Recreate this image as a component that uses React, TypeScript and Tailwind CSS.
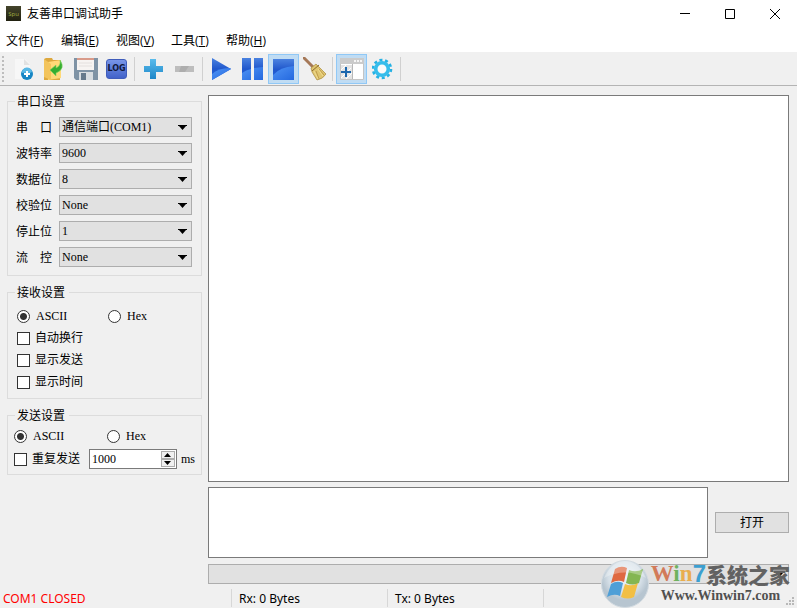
import type { ReactNode } from 'react';

const menus = [
  { label: '文件', key: 'F' },
  { label: '编辑', key: 'E' },
  { label: '视图', key: 'V' },
  { label: '工具', key: 'T' },
  { label: '帮助', key: 'H' },
];

const portFields = [
  { id: 'port', label: '串　口', value: '通信端口(COM1)' },
  { id: 'baud', label: '波特率', value: '9600' },
  { id: 'data', label: '数据位', value: '8' },
  { id: 'parity', label: '校验位', value: 'None' },
  { id: 'stop', label: '停止位', value: '1' },
  { id: 'flow', label: '流　控', value: 'None' },
];

function Arrow({ up = false }: { up?: boolean }) {
  return (
    <svg width="7" height="4" viewBox="0 0 7 4" className="block">
      <path d={up ? 'M0 4h7L3.500 0z' : 'M0 0h7L3.500 4z'} fill="#000" />
    </svg>
  );
}

function Select({ id, value, label }: { id: string; value?: string; label?: string }) {
  return (
    <div className="relative min-w-0 flex-1">
      <select
        id={id}
        aria-label={label}
        className="block h-5 w-full appearance-none border border-[#adadad] bg-[#e1e1e1] pl-[2px] pr-5 text-xs leading-4 outline-none"
      >
        <option>{value ?? ''}</option>
      </select>
      <svg width="9" height="5" viewBox="0 0 9 5" className="pointer-events-none absolute right-[5px] top-2">
        <path d="M0 0h9v1h-1L4.500 5 1 1H0z" fill="#000" />
      </svg>
    </div>
  );
}

function Group({ title, className, children }: { title: string; className: string; children: ReactNode }) {
  return (
    <fieldset className={`min-w-0 border border-[#dcdcdc] ${className}`}>
      <legend className="-ml-px pl-[2px] pr-1 pt-[2px] text-xs leading-4">{title}</legend>
      {children}
    </fieldset>
  );
}

function Radio({ name, label, checked }: { name: string; label: string; checked?: boolean }) {
  return (
    <label className="flex items-center gap-[6px] leading-4">
      <input
        type="radio"
        name={name}
        defaultChecked={checked}
        className="size-[13px] appearance-none rounded-full border border-[#333] bg-white checked:bg-[radial-gradient(circle,#333_0_3px,#fff_4px)]"
      />
      {label}
    </label>
  );
}

function Check({ label }: { label: string }) {
  return (
    <label className="flex h-[22px] items-center gap-[5px] leading-4">
      <input type="checkbox" className="size-[13px] appearance-none border border-[#333] bg-white checked:bg-[#333]" />
      {label}
    </label>
  );
}

function ToolButton({ label, active, children }: { label: string; active?: boolean; children: ReactNode }) {
  return (
    <button
      type="button"
      aria-label={label}
      className={`flex h-[30px] w-[31px] items-center justify-center border ${active ? 'border-[#90c8f6] bg-[#c0dcf3]' : 'border-transparent'}`}
    >
      {children}
    </button>
  );
}

function Separator() {
  return <div className="ml-[2px] mr-[3px] h-6 w-px bg-[#d0d0d0]" />;
}

function Toolbar() {
  return (
    <div className="flex h-[33px] items-center border-b border-[#b4b4b4] bg-[#f0f0f0] pl-[2px]">
      <svg width="6" height="28" viewBox="0 0 6 28">
        {[1, 5, 9, 13, 17, 21, 25].map((y) => (
          <rect key={y} x="0" y={y} width="2" height="2" fill="#bdbdbd" />
        ))}
      </svg>
      <ToolButton label="新建">
        <svg width="24" height="24" viewBox="1 0 24 24" className="shrink-0">
          <path d="M4 2h10l5 5v15H4z" fill="#f7f7f7" />
          <path d="M13 2l6 6h-6z" fill="#e2e2e2" />
          <circle cx="16" cy="17" r="6" fill="#1786c4" />
          <path d="M11 16a5 5 0 0 1 10-1c-3 2-6 0-10 1z" fill="#5ab9e6" />
          <path d="M16 14v6M13 17h6" stroke="#fff" strokeWidth="2" />
        </svg>
      </ToolButton>
      <ToolButton label="打开文件">
        <svg width="24" height="24" viewBox="1 0 24 24" className="shrink-0">
          <path d="M2 2l2-1h6l1 2h7v20H2z" fill="#dda83e" />
          <path d="M6 5l13-2v18l-13 2z" fill="#ffd978" />
          <path d="M2 2l7 5v16l-7-3z" fill="#f3c45c" />
          <path d="M18 3q6 9-4 13v3l-6-6 6-5v3q5-2 4-8z" fill="#35ad31" stroke="#7ed45e" strokeWidth=".6" />
        </svg>
      </ToolButton>
      <ToolButton label="保存">
        <svg width="24" height="24" viewBox="1 0 24 24" className="shrink-0">
          <path d="M1 1h24v22H3l-2-2z" fill="#7f93a5" />
          <path d="M4 1h17v12H4z" fill="#f7f4f2" />
          <path d="M4 1h17v2H4z" fill="#d99b8a" />
          <path d="M6 6h13M6 9h13" stroke="#e4e0de" />
          <path d="M6 15h14v8H6z" fill="#d8dde1" />
          <path d="M8 16h5v7H8z" fill="#65798b" />
        </svg>
      </ToolButton>
      <ToolButton label="日志">
        <span className="flex h-5 w-[21px] shrink-0 items-center justify-center rounded-[3px] border border-[#405dbb] bg-linear-to-b from-[#7895e8] to-[#4262c9] font-['DejaVu_Sans'] text-[8px] font-bold text-[#10183c]">
          LOG
        </span>
      </ToolButton>
      <Separator />
      <ToolButton label="添加">
        <svg width="20" height="20" viewBox="1 0 20 20" className="shrink-0">
          <defs>
            <linearGradient id="plus" x2="0" y2="1">
              <stop stopColor="#5bbcec" />
              <stop offset="1" stopColor="#1c86c8" />
            </linearGradient>
          </defs>
          <path d="M7 0h6v7h7v6h-7v7H7v-7H1V7h6z" fill="url(#plus)" />
        </svg>
      </ToolButton>
      <ToolButton label="删除">
        <svg width="20" height="20" viewBox="1 0 20 20" className="shrink-0">
          <path d="M1 7h19v6H1z" fill="#bdbdbd" />
          <path d="M7 7h8l-4 6H5z" fill="#adadad" />
        </svg>
      </ToolButton>
      <Separator />
      <ToolButton label="开始">
        <svg width="20" height="24" viewBox="2 0 20 24" className="shrink-0">
          <defs>
            <linearGradient id="blue" x2="0" y2="1">
              <stop stopColor="#4a82e0" />
              <stop offset=".5" stopColor="#2057cc" />
              <stop offset="1" stopColor="#2465df" />
            </linearGradient>
            <linearGradient id="shine" x2="1" y2="1">
              <stop stopColor="#4f94f4" />
              <stop offset="1" stopColor="#2468df" />
            </linearGradient>
          </defs>
          <path d="M2 1l19 11L2 23z" fill="url(#blue)" />
          <path d="M2 17q6-6 18-6l1 1L2 23z" fill="url(#shine)" />
        </svg>
      </ToolButton>
      <ToolButton label="暂停">
        <svg width="22" height="22" viewBox="1 0 22 22" className="shrink-0">
          <path d="M1 0h9v22H1zM13 0h9v22h-9z" fill="url(#blue)" />
          <path d="M1 15q4-3 9-4v11H1zM13 10l9-1v13h-9z" fill="url(#shine)" />
        </svg>
      </ToolButton>
      <ToolButton label="停止" active>
        <svg width="22" height="22" viewBox="1 0 22 22" className="shrink-0">
          <path d="M1 1h21v21H1z" fill="url(#blue)" />
          <path d="M1 17q7-8 21-9v14H1z" fill="url(#shine)" />
        </svg>
      </ToolButton>
      <ToolButton label="清除">
        <svg width="24" height="24" viewBox="1 1 24 24" className="shrink-0">
          <path d="M2 2l11 11" stroke="#a57858" strokeWidth="3" strokeLinecap="round" />
          <path d="M14 8l3 3 7 7q-3 5-9 6l-5-8-1-4z" fill="#dfc56f" stroke="#a98b3c" strokeWidth=".7" />
          <path d="M10 15l7-6" stroke="#8e6b2c" />
          <path d="M14 15l3 8M17 13l5 6" stroke="#b1893c" strokeWidth=".7" />
          <path d="M12 15l4 8M16 13l5 7" stroke="#f0dc90" />
        </svg>
      </ToolButton>
      <Separator />
      <ToolButton label="面板" active>
        <svg width="24" height="22" viewBox="0 0 24 22" className="shrink-0">
          <path d="M.5.500h23v21H.5z" fill="#fff" stroke="#c4c4c4" />
          <path d="M0 0h24v6H0z" fill="#cbcbcb" />
          <path d="M14 3h2M17 3h2M20 3h2" stroke="#f5f5f5" strokeWidth="2" />
          <path d="M1 7h11v14H1z" fill="#e4e4e4" />
          <path d="M1 12l5-5M1 20l10-10M6 21l6-6" stroke="#fff" />
          <path d="M12.500 6v15" stroke="#b8b8b8" />
          <path d="M6 9v10M1 14h10" stroke="#1d67ad" strokeWidth="2" />
        </svg>
      </ToolButton>
      <ToolButton label="设置">
        <svg width="22" height="22" viewBox="1 0 22 22" className="shrink-0">
          <circle cx="11" cy="11" r="9" fill="none" stroke="#25b1e4" strokeWidth="2.600" strokeDasharray="3 2.655" />
          <circle cx="11" cy="11" r="6.300" fill="#fafafa" stroke="#36bdeb" strokeWidth="3.600" />
        </svg>
      </ToolButton>
      <Separator />
    </div>
  );
}

function Watermark() {
  return (
    <div className="pointer-events-none absolute bottom-0 right-[7px] flex items-center gap-[2px]">
      <svg width="48" height="48" viewBox="0 0 48 48" className="shrink-0">
        <defs>
          <radialGradient id="orb" cx=".5" cy=".35">
            <stop stopColor="#eef4f8" />
            <stop offset=".7" stopColor="#d5dfe7" />
            <stop offset="1" stopColor="#b7c5d0" />
          </radialGradient>
        </defs>
        <circle cx="24" cy="24" r="23.500" fill="url(#orb)" stroke="#d3dbe1" />
        <path d="M14 9q6-4 12-1l-3 14q-6-3-13 1z" fill="#df6941" />
        <path d="M28 10q7 3 14-1l-4 14q-6 3-13 0z" fill="#84b652" />
        <path d="M10 24q6-4 12-1l-3 13q-6-3-13 1z" fill="#4f9fd7" />
        <path d="M24 24q7 3 13-1l-4 14q-6 3-13 0z" fill="#f2bf45" />
        <path d="M3 18q8-17 21-17t21 17Q24 7 3 18z" fill="#fff" fillOpacity=".3" />
      </svg>
      <div className="flex flex-col whitespace-nowrap">
        <div className="flex items-center text-[21px] font-black leading-6">
          <span className="w-[42px] font-['Liberation_Serif',serif] text-[23px]">
            <span className="text-[#d27a59]">W</span>
            <span className="text-[#6fb25f]">i</span>
            <span className="text-[#e9ad4e]">n</span>
          </span>
          <span className="font-['Liberation_Sans',sans-serif] text-[24px] text-[#3c9fd0]">7</span>
          <span className="font-['Noto_Sans_CJK_SC',sans-serif] text-[#626262]">系统之家</span>
        </div>
        <span className="pl-[10px] font-['Liberation_Serif',serif] text-[14px] font-bold leading-5 text-[#505050]">
          Www.Winwin7.com
        </span>
      </div>
    </div>
  );
}

export default function App() {
  return (
    <div className="relative flex min-h-screen flex-col bg-[#f0f0f0] font-['Open_Sans','Noto_Sans_CJK_SC',sans-serif] text-xs text-black">
      <header className="flex h-[27px] items-center bg-white pl-[6px]">
        <span className="flex size-[15px] items-center justify-center bg-linear-to-b from-[#45452c] to-[#202010] text-[6px] text-[#a1b044]">
          Spu
        </span>
        <h1 className="flex-1 pl-[6px]">友善串口调试助手</h1>
        <button type="button" aria-label="最小化" className="flex h-full w-[45px] items-center justify-center">
          <svg width="10" height="10" viewBox="0 0 10 10"><path d="M0 4.500h10" stroke="#000" /></svg>
        </button>
        <button type="button" aria-label="最大化" className="flex h-full w-[45px] items-center justify-center">
          <svg width="10" height="10" viewBox="0 0 10 10"><path d="M.5.5h9v9h-9z" stroke="#000" fill="none" /></svg>
        </button>
        <button type="button" aria-label="关闭" className="flex h-full w-[45px] items-center justify-center">
          <svg width="10" height="10" viewBox="0 0 10 10"><path d="M0 0l10 10M10 0L0 10" stroke="#000" /></svg>
        </button>
      </header>

      <nav className="flex h-[26px] items-center gap-4 border-b border-[#f0f0f0] bg-white pl-[6px] pt-[2px]">
        {menus.map((m) => (
          <button key={m.key} type="button" className="w-[39px] whitespace-nowrap text-left">
            {m.label}(<u>{m.key}</u>)
          </button>
        ))}
      </nav>

      <Toolbar />

      <main className="flex flex-1 gap-[6px] pb-1 pl-[7px] pr-2 font-['Liberation_Serif','Noto_Sans_CJK_SC',serif]">
        <aside className="flex w-[195px] shrink-0 flex-col gap-[7px] pt-[6px]">
          <Group title="串口设置" className="pb-2 pl-2 pr-[9px] pt-[7px]">
            <div className="flex flex-col gap-[6px]">
              {portFields.map((f) => (
                <div key={f.id} className="flex items-center">
                  <label htmlFor={f.id} className="w-[43px] pt-[2px] leading-4">{f.label}</label>
                  <Select id={f.id} value={f.value} />
                </div>
              ))}
            </div>
          </Group>

          <Group title="接收设置" className="px-2 pb-[5px] pt-1">
            <div className="flex h-[22px] items-center pl-px">
              <div className="w-[91px]"><Radio name="rx" label="ASCII" checked /></div>
              <Radio name="rx" label="Hex" />
            </div>
            <div className="pl-px">
              <Check label="自动换行" />
              <Check label="显示发送" />
              <Check label="显示时间" />
            </div>
          </Group>

          <Group title="发送设置" className="px-2 pb-[5px] pt-px">
            <div className="-mx-[2px] flex h-[22px] items-center">
              <div className="w-[93px]"><Radio name="tx" label="ASCII" checked /></div>
              <Radio name="tx" label="Hex" />
            </div>
            <div className="-mx-[2px] mt-[2px] flex h-5 items-center">
              <div className="w-[76px]"><Check label="重复发送" /></div>
              <div className="flex h-5 w-[88px] border border-[#7a7a7a] bg-white p-px">
                <input aria-label="重复发送间隔" defaultValue="1000" className="min-w-0 flex-1 bg-transparent pl-px outline-none" />
                <div className="flex w-[14px] flex-col">
                  <button type="button" aria-label="增加" className="flex flex-1 items-center justify-center border border-[#adadad] bg-[#f0f0f0]">
                    <Arrow up />
                  </button>
                  <button type="button" aria-label="减少" className="flex flex-1 items-center justify-center border border-[#adadad] bg-[#f0f0f0]">
                    <Arrow />
                  </button>
                </div>
              </div>
              <span className="pl-1">ms</span>
            </div>
          </Group>
        </aside>

        <section className="flex min-w-0 flex-1 flex-col pt-[9px]">
          <textarea aria-label="接收区" className="block min-h-40 w-full flex-1 resize-none border border-[#7a7a7a] bg-white p-1 outline-none" />
          <div className="mt-[5px] flex items-center gap-[7px]">
            <textarea aria-label="发送区" className="block h-[71px] min-w-0 flex-1 resize-none border border-[#7a7a7a] bg-white p-1 outline-none" />
            <button type="button" className="h-[21px] w-[74px] border border-[#adadad] bg-[#e1e1e1] leading-4">打开</button>
          </div>
          <div className="mt-[6px] flex">
            <Select id="history" label="发送历史" />
          </div>
        </section>
      </main>

      <footer className="flex h-5 items-center font-['Noto_Sans',sans-serif]">
        <span className="w-[231px] pl-[3px] pt-[2px] text-[#ff0000]">COM1 CLOSED</span>
        <span className="w-[156px] border-l border-[#d7d7d7] pl-[7px] pt-[2px]">Rx: 0 Bytes</span>
        <span className="w-[156px] border-l border-[#d7d7d7] pl-[7px] pt-[2px]">Tx: 0 Bytes</span>
        <span className="h-[18px] flex-1 border-l border-[#d7d7d7]" />
        <svg width="10" height="10" viewBox="0 0 10 10" className="mr-px mt-2">
          <path d="M6 0h2v2H6zM3 3h2v2H3zM6 3h2v2H6zM0 6h2v2H0zM3 6h2v2H3zM6 6h2v2H6z" fill="#b8b8b8" />
        </svg>
      </footer>

      <Watermark />
    </div>
  );
}
